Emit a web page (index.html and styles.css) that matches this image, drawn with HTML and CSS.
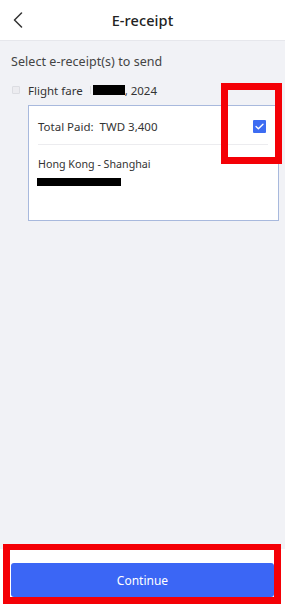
FILE: index.html
```html
<!DOCTYPE html>
<html>
<head>
<meta charset="utf-8">
<link rel="stylesheet" href="styles.css">
</head>
<body>
<div class="page">
  <header class="topbar">
    <span class="back">
      <svg width="10" height="16" viewBox="0 0 10 16"><path d="M8.5 1 L1.5 8 L8.5 15" fill="none" stroke="#333" stroke-width="1.5" stroke-linecap="round" stroke-linejoin="round"/></svg>
    </span>
    <h1 class="title">E-receipt</h1>
  </header>
  <main class="content">
    <p class="lead">Select e-receipt(s) to send</p>
    <div class="group">
      <span class="mini-box"></span>
      <span class="group-label">Flight fare</span>
      <span class="sep"></span>
      <span class="redact redact-date"></span>
      <span class="group-label">, 2024</span>
    </div>
    <div class="card">
      <div class="card-head">
        <span class="paid">Total Paid:&nbsp; TWD 3,400</span>
        <span class="check">
          <svg width="9" height="7" viewBox="0 0 9 7"><path d="M1 3.6 L3.4 5.8 L8 1.2" fill="none" stroke="#fff" stroke-width="1.4" stroke-linecap="round" stroke-linejoin="round"/></svg>
        </span>
      </div>
      <div class="card-body">
        <div class="route">Hong Kong - Shanghai</div>
        <div class="redact redact-info"></div>
      </div>
    </div>
  </main>
  <footer class="footer">
    <button class="continue">Continue</button>
  </footer>
  <div class="mark mark-check"></div>
  <div class="mark mark-button"></div>
</div>
</body>
</html>
```
FILE: styles.css
```css
* { box-sizing: border-box; }
html, body { margin: 0; padding: 0; }
body {
  font-family: "Noto Sans", "Open Sans", sans-serif;
  background: #f1f2f6;
  color: #333;
}
.page {
  position: relative;
  width: 285px;
  height: 607px;
  display: flex;
  flex-direction: column;
  overflow: hidden;
}
.topbar {
  height: 41px;
  background: #fff;
  border-bottom: 1px solid #e6e7ec;
  display: flex;
  align-items: center;
  justify-content: center;
  position: relative;
  flex: none;
}
.back {
  position: absolute;
  left: 13px;
  top: 12px;
  display: flex;
}
.title {
  margin: 0;
  font-size: 14.5px;
  font-weight: 500;
  color: #222;
  letter-spacing: 0.1px;
}
.content {
  flex: 1;
  padding: 12px 6px 0 11px;
}
.lead {
  margin: 0;
  font-size: 12.5px;
  color: #444;
  line-height: 18px;
  letter-spacing: 0.05px;
}
.group {
  display: flex;
  align-items: center;
  margin-top: 11px;
  height: 16px;
}
.mini-box {
  width: 8px;
  height: 8px;
  border: 1px solid #dcdde2;
  background: #ececf0;
  border-radius: 1px;
  margin-left: 1px;
  margin-right: 8px;
}
.group-label {
  font-size: 11.5px;
  color: #333;
}
.sep {
  width: 1px;
  height: 8px;
  background: #ddd;
  margin: 0 2px 0 7px;
}
.redact { background: #000; }
.redact-date {
  width: 32px;
  height: 10px;
}
.card {
  margin-left: 17px;
  margin-top: 7px;
  width: 251px;
  height: 116px;
  background: #fff;
  border: 1px solid #a8b9dd;
  padding: 0 10px 0 9px;
}
.card-head {
  height: 39px;
  border-bottom: 1px solid #ececef;
  display: flex;
  align-items: center;
  justify-content: space-between;
  padding-top: 3px;
}
.paid {
  font-size: 11.5px;
  color: #333;
}
.check {
  width: 13px;
  height: 13px;
  background: #3d6cf2;
  border-radius: 1px;
  display: flex;
  align-items: center;
  justify-content: center;
  margin-right: 2px;
}
.card-body {
  padding-top: 12px;
}
.route {
  font-size: 10.7px;
  color: #333;
  line-height: 14px;
}
.redact-info {
  width: 84px;
  height: 8px;
  margin-top: 7px;
  margin-left: -1px;
}
.footer {
  flex: none;
  height: 58px;
  background: #fff;
  padding: 14px 11px 0 11px;
}
.continue {
  width: 100%;
  height: 34px;
  border: none;
  border-radius: 3px;
  background: #3b66f5;
  color: #fff;
  font-family: inherit;
  font-size: 12px;
  padding: 0;
}
.mark {
  position: absolute;
  border: 7px solid #f40006;
  pointer-events: none;
}
.mark-check {
  left: 221px;
  top: 83px;
  width: 61px;
  height: 81px;
}
.mark-button {
  left: 3px;
  top: 544px;
  width: 278px;
  height: 60px;
  border-width: 6px 7px 7px 7px;
}
```
